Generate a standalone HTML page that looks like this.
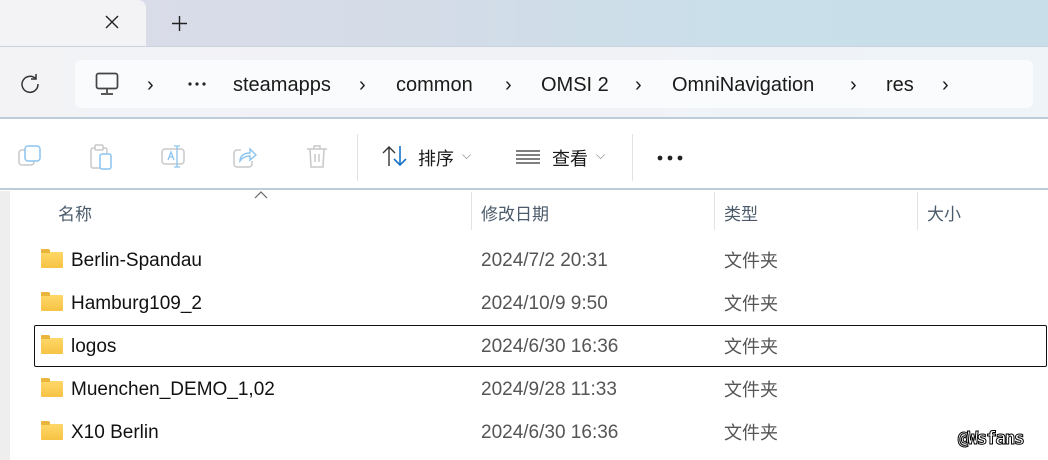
<!DOCTYPE html>
<html><head><meta charset="utf-8"><style>
*{margin:0;padding:0;box-sizing:border-box}
body{width:1048px;height:460px;overflow:hidden;font-family:"Segoe UI","Liberation Sans","Noto Sans CJK SC",sans-serif;background:#fff;position:relative;color:#1a1a1a}
.abs{position:absolute}
.tabs{left:0;top:0;width:1048px;height:46px;background:linear-gradient(90deg,#dcdde8 0%,#d4dce8 40%,#c9dfea 70%,#c8dfea 100%)}
.tab{left:0;top:0;width:146px;height:46px;background:#f3f3f6;border-top-right-radius:8px}
.addr{left:0;top:46px;width:1048px;height:73px;background:linear-gradient(90deg,#f3f3f6,#f0f2f6 50%,#eef4f8);border-top:1px solid #c9d3de;border-bottom:2px solid #bccdd9}
.bar{left:75px;top:60px;width:958px;height:48px;background:#fafbfc;border-radius:6px}
.bc{top:74px;font-size:20px;color:#1a1a1a}
.tb{left:0;top:120px;width:1048px;height:70px;background:#fff;border-bottom:2px solid #bccdd9}
.hdr{font-size:17px;color:#4a5a6a;top:200px}
.row{font-size:19px;color:#111}
.gr{font-size:19px;color:#555}
.cj{font-size:18px;color:#555}
.folder{width:22px;height:16px;background:linear-gradient(#ffd86a,#f6c343);border-radius:1px}
.folder:before{content:"";position:absolute;left:0;top:-3px;width:9px;height:4px;background:#e9b53a;border-radius:1px 2px 0 0}
</style></head><body>
<div class="abs tabs"></div>
<div class="abs tab"></div>
<svg class="abs" style="left:104px;top:14px" width="16" height="16"><path d="M2 2L14 14M14 2L2 14" stroke="#222" stroke-width="1.4"/></svg>
<svg class="abs" style="left:171px;top:15px" width="17" height="17"><path d="M8.5 1V16M1 8.5H16" stroke="#222" stroke-width="1.4"/></svg>
<div class="abs addr"></div>
<div class="abs bar"></div>
<svg class="abs" style="left:19px;top:73px" width="22" height="22"><path d="M17 6A8 8 0 1 0 19 11" fill="none" stroke="#333" stroke-width="1.5"/><path d="M17 1V6H12" fill="none" stroke="#333" stroke-width="1.5"/></svg>
<svg class="abs" style="left:95px;top:72px" width="24" height="24"><rect x="1.5" y="1.5" width="21" height="15" rx="2" fill="none" stroke="#444" stroke-width="1.7"/><path d="M12 17V21M6 22H18" stroke="#444" stroke-width="1.7"/></svg>
<div class="abs bc" style="left:147px">›</div>
<svg class="abs" style="left:188px;top:82px" width="18" height="4"><circle cx="2" cy="2" r="1.6" fill="#222"/><circle cx="9" cy="2" r="1.6" fill="#222"/><circle cx="16" cy="2" r="1.6" fill="#222"/></svg>
<div class="abs bc" style="left:233px">steamapps</div>
<div class="abs bc" style="left:359px">›</div>
<div class="abs bc" style="left:396px">common</div>
<div class="abs bc" style="left:505px">›</div>
<div class="abs bc" style="left:541px">OMSI 2</div>
<div class="abs bc" style="left:635px">›</div>
<div class="abs bc" style="left:672px">OmniNavigation</div>
<div class="abs bc" style="left:850px">›</div>
<div class="abs bc" style="left:886px">res</div>
<div class="abs bc" style="left:942px">›</div>
<div class="abs tb"></div>
<svg class="abs" style="left:17px;top:144px" width="26" height="26"><rect x="2" y="6" width="15" height="15" rx="3" fill="none" stroke="#c8c8c8" stroke-width="1.5"/><rect x="8" y="2" width="15" height="15" rx="3" fill="#fff" stroke="#8cc4ef" stroke-width="1.5"/></svg>
<svg class="abs" style="left:89px;top:144px" width="26" height="26"><rect x="2" y="4" width="16" height="20" rx="2" fill="none" stroke="#c8c8c8" stroke-width="1.5"/><rect x="6" y="1" width="8" height="5" rx="1" fill="#fff" stroke="#c8c8c8" stroke-width="1.5"/><rect x="11" y="10" width="11" height="15" rx="2" fill="#fff" stroke="#8cc4ef" stroke-width="1.5"/></svg>
<svg class="abs" style="left:160px;top:144px" width="28" height="26"><rect x="2" y="5" width="22" height="15" rx="3" fill="none" stroke="#c8c8c8" stroke-width="1.5"/><path d="M8 16L11 8L14 16M9 13H13" fill="none" stroke="#8cc4ef" stroke-width="1.3"/><path d="M17 2V23M14 2H20M14 23H20" stroke="#8cc4ef" stroke-width="1.3" fill="none"/></svg>
<svg class="abs" style="left:232px;top:144px" width="26" height="26"><path d="M9 6H5A3 3 0 0 0 2 9V20A3 3 0 0 0 5 23H17A3 3 0 0 0 20 20V17" fill="none" stroke="#c8c8c8" stroke-width="1.5"/><path d="M8 17C8 11 13 9 18 9V5L24 11L18 16V12C13 12 10 14 8 17Z" fill="none" stroke="#8cc4ef" stroke-width="1.4"/></svg>
<svg class="abs" style="left:305px;top:144px" width="24" height="26"><path d="M2 5H22M9 5V2H15V5M5 5L6 23H18L19 5M10 10V18M14 10V18" fill="none" stroke="#c8c8c8" stroke-width="1.5"/></svg>
<div class="abs" style="left:357px;top:134px;width:1px;height:47px;background:#e3e3e3"></div>
<div class="abs" style="left:632px;top:134px;width:1px;height:47px;background:#e3e3e3"></div>
<svg class="abs" style="left:382px;top:145px" width="26" height="22"><path d="M7 21V2M1 8L7 2L13 8" fill="none" stroke="#333" stroke-width="1.4"/><path d="M18 1V20M12 14L18 20L24 14" fill="none" stroke="#1a73c8" stroke-width="1.6"/></svg>
<div class="abs" style="left:418px;top:145px;font-size:18px">排序</div>
<div class="abs" style="left:462px;top:148px;font-size:12px;color:#777">⌵</div>
<svg class="abs" style="left:516px;top:150px" width="24" height="14"><path d="M0 1H24M0 5H24M0 9H24M0 13H24" stroke="#333" stroke-width="1.3"/></svg>
<div class="abs" style="left:552px;top:145px;font-size:18px">查看</div>
<div class="abs" style="left:596px;top:148px;font-size:12px;color:#777">⌵</div>
<svg class="abs" style="left:657px;top:154px" width="26" height="8"><circle cx="3" cy="4" r="2.4" fill="#222"/><circle cx="13" cy="4" r="2.4" fill="#222"/><circle cx="23" cy="4" r="2.4" fill="#222"/></svg>
<div class="abs" style="left:0;top:191px;width:10px;height:269px;background:#eeeeee"></div>
<svg class="abs" style="left:254px;top:191px" width="14" height="8"><path d="M1 7L7 1L13 7" fill="none" stroke="#666" stroke-width="1.2"/></svg>
<div class="abs hdr" style="left:58px">名称</div>
<div class="abs" style="left:471px;top:192px;width:1px;height:38px;background:#e3e3e3"></div>
<div class="abs hdr" style="left:481px">修改日期</div>
<div class="abs" style="left:714px;top:192px;width:1px;height:38px;background:#e3e3e3"></div>
<div class="abs hdr" style="left:724px">类型</div>
<div class="abs" style="left:917px;top:192px;width:1px;height:38px;background:#e3e3e3"></div>
<div class="abs hdr" style="left:927px">大小</div>
<div class="abs" style="left:34px;top:325px;width:1013px;height:42px;border:1px solid #111;border-radius:2px"></div>

<div class="abs folder" style="left:41px;top:252px"></div><div class="abs row" style="left:71px;top:250px">Berlin-Spandau</div><div class="abs gr" style="left:481px;top:250px">2024/7/2 20:31</div><div class="abs cj" style="left:724px;top:247px">文件夹</div>
<div class="abs folder" style="left:41px;top:295px"></div><div class="abs row" style="left:71px;top:293px">Hamburg109_2</div><div class="abs gr" style="left:481px;top:293px">2024/10/9 9:50</div><div class="abs cj" style="left:724px;top:290px">文件夹</div>
<div class="abs folder" style="left:41px;top:338px"></div><div class="abs row" style="left:71px;top:336px">logos</div><div class="abs gr" style="left:481px;top:336px">2024/6/30 16:36</div><div class="abs cj" style="left:724px;top:333px">文件夹</div>
<div class="abs folder" style="left:41px;top:381px"></div><div class="abs row" style="left:71px;top:379px">Muenchen_DEMO_1,02</div><div class="abs gr" style="left:481px;top:379px">2024/9/28 11:33</div><div class="abs cj" style="left:724px;top:376px">文件夹</div>
<div class="abs folder" style="left:41px;top:424px"></div><div class="abs row" style="left:71px;top:422px">X10 Berlin</div><div class="abs gr" style="left:481px;top:422px">2024/6/30 16:36</div><div class="abs cj" style="left:724px;top:419px">文件夹</div>
<div class="abs" style="left:958px;top:428px;font-size:18px;font-weight:bold;color:#fff;-webkit-text-stroke:1px #000;font-family:'DejaVu Sans Mono',monospace;letter-spacing:-1.5px">@Wsfans</div>
</body></html>
